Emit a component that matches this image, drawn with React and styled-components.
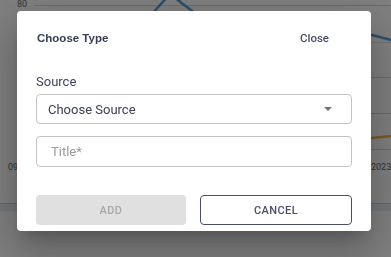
import React from "react"
import styled, {createGlobalStyle} from "styled-components"

const GlobalStyle = createGlobalStyle`
    *{
        margin: 0;
        padding: 0;
        box-sizing: border-box;
    }
    body{
        background: #ffffff;
        font-family: Roboto, "Liberation Sans", sans-serif;
        overflow: hidden;
    }
`;

const Page = styled.div`
    width: 391px;
    height: 257px;
    position: relative;
`;

const Chart = styled.svg`
    display: block;
    width: 391px;
    height: 257px;
`;

const Overlay = styled.div`
    position: fixed;
    inset: 0;
    background: rgba(0, 0, 0, 0.5);
    display: flex;
    align-items: flex-start;
    padding: 11px 0 0 17px;
`;

const Dialog = styled.div`
    width: 354px;
    height: 220px;
    background: #ffffff;
    border-radius: 4px;
    padding: 20px 19px 6px;
    display: flex;
    flex-direction: column;
    box-shadow: 0px 11px 15px -7px rgba(0,0,0,0.2), 0px 24px 38px 3px rgba(0,0,0,0.14), 0px 9px 46px 8px rgba(0,0,0,0.12);
`;

const Header = styled.div`
    display: flex;
    justify-content: space-between;
    align-items: center;
    height: 14px;
    margin-bottom: 29px;
`;

const Title = styled.h2`
    font-family: "Liberation Sans", Arial, sans-serif;
    font-weight: 700;
    font-size: 11.5px;
    padding-left: 1px;
    color: #383c58;
`;

const CloseButton = styled.button`
    border: none;
    background: none;
    font-family: Roboto, sans-serif;
    font-weight: 500;
    font-size: 11.5px;
    color: #4a4e69;
    margin-right: 23px;
    cursor: pointer;
`;

const Label = styled.label`
    display: block;
    font-size: 13px;
    line-height: 16px;
    color: #3f4360;
    margin-bottom: 4px;
`;

const Field = styled.div`
    height: ${p => p.$h}px;
    border: 1px solid #c4c4c4;
    border-radius: 4px;
    display: flex;
    align-items: center;
    justify-content: space-between;
    padding: 0 19px 0 ${p => p.$pad}px;
    margin-bottom: ${p => p.$mb || 0}px;
    font-size: 13px;
    color: ${p => p.$placeholder ? "#9a9a9a" : "#3c4055"};
`;

const Footer = styled.div`
    display: flex;
    gap: 14px;
    margin-top: 28px;
`;

const Button = styled.button`
    flex: 1;
    height: 30px;
    border-radius: 4px;
    font-family: Roboto, sans-serif;
    font-weight: 500;
    font-size: 11px;
    letter-spacing: 0.4px;
    background: ${p => p.$outlined ? "#ffffff" : "#e0e0e0"};
    color: ${p => p.$outlined ? "#4a4e69" : "#a8a8a8"};
    border: ${p => p.$outlined ? "1px solid #4a4e69" : "none"};
`;

const Arrow = () => (
    <svg width="8" height="4" viewBox="0 0 8 4">
        <path d="M0 0 L8 0 L4 4 Z" fill="#757575" />
    </svg>
)

export default function App() {
    return (
        <Page>
            <GlobalStyle />
            <Chart viewBox="0 0 391 257">
                <text x="17" y="7" fontSize="9" fill="#666" fontFamily="Roboto">80</text>
                <line x1="35" y1="5.5" x2="391" y2="5.5" stroke="#d6d6d6" />
                <line x1="35" y1="42.5" x2="391" y2="42.5" stroke="#e6e6e6" />
                <line x1="35" y1="77.5" x2="391" y2="77.5" stroke="#d6d6d6" />
                <line x1="35" y1="113.5" x2="391" y2="113.5" stroke="#d6d6d6" />
                <line x1="35" y1="149.5" x2="391" y2="149.5" stroke="#d6d6d6" />
                <polyline points="150,16 170,-6 196,14 372,35 391,40" fill="none" stroke="#4fa0e0" strokeWidth="2.5" />
                <polyline points="330,142 372,138 391,136" fill="none" stroke="#f2b247" strokeWidth="2.5" />
                <text x="8" y="170" fontSize="9" fill="#666" fontFamily="Roboto">09</text>
                <text x="371" y="170" fontSize="9" fill="#666" fontFamily="Roboto">2023</text>
                <rect x="0" y="203" width="391" height="8" fill="#e8f0f6" />
                <line x1="0" y1="203.5" x2="391" y2="203.5" stroke="#c8d0d8" />
            </Chart>
            <Overlay>
                <Dialog>
                    <Header>
                        <Title>Choose Type</Title>
                        <CloseButton>Close</CloseButton>
                    </Header>
                    <Label>Source</Label>
                    <Field $h={30} $pad={11} $mb={12}>
                        Choose Source
                        <Arrow />
                    </Field>
                    <Field $h={31} $pad={14} $placeholder>Title*</Field>
                    <Footer>
                        <Button>ADD</Button>
                        <Button $outlined>CANCEL</Button>
                    </Footer>
                </Dialog>
            </Overlay>
        </Page>
    )
}
